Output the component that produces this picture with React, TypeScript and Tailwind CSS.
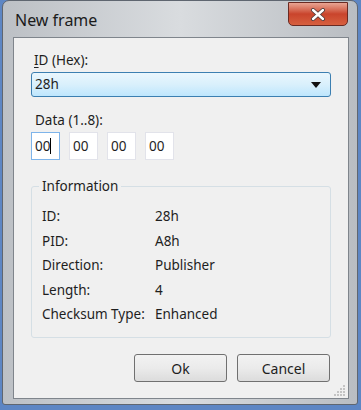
import React from "react"

const rows: [string, string][] = [
  ["ID:", "28h"],
  ["PID:", "A8h"],
  ["Direction:", "Publisher"],
  ["Length:", "4"],
  ["Checksum Type:", "Enhanced"],
]

const font = { fontFamily: '"Noto Sans", "Open Sans", sans-serif' }

export default function App() {
  return (
    <div className="w-[361px] h-[410px] bg-[#5d86c4] pl-[2px] pr-[3px] pb-[5px]" style={font}>
      <div className="h-full rounded-t-[7px] rounded-b-[3px] border border-[#5f6670] bg-gradient-to-r from-[#bcc0c5] via-[#d9dcdf] to-[#b9bdc2] flex flex-col">
        {/* title bar */}
        <div className="h-[36px] flex items-start justify-between pl-[12px] pr-[9px]">
          <span className="mt-[7px] text-[16px] text-[#1b1b1b]">New frame</span>
          <button className="mt-[1px] w-[60px] h-[24px] rounded-b-[5px] border border-[#6a2a22] bg-gradient-to-b from-[#e8a493] via-[#c9442c] to-[#d7603f] flex items-center justify-center">
            <svg width="16" height="13" viewBox="0 0 16 13">
              <path d="M3 2 L13 11 M13 2 L3 11" stroke="#4a3a3a" strokeWidth="4" strokeLinecap="round" />
              <path d="M3 2 L13 11 M13 2 L3 11" stroke="#ffffff" strokeWidth="2.4" strokeLinecap="round" />
            </svg>
          </button>
        </div>

        {/* client area */}
        <div className="flex-1 ml-[10px] mr-[8px] mb-[5px] border border-[#7f858c] bg-[#f0f0f0] relative">
          <div className="pl-[17px] pr-[17px] pt-[12px] text-[13.5px] text-[#1e1e1e]">
            <div className="pl-[3px] h-[20px] leading-[20px]">
              <span className="underline underline-offset-2">I</span>D (Hex):
            </div>
            <div className="mt-[2px] h-[25px] rounded-[3px] border border-[#3c7fb1] bg-gradient-to-b from-[#eaf6fd] via-[#d9f0fc] to-[#bee6fd] flex items-center justify-between pl-[3px] pr-[9px]">
              <span>28h</span>
              <svg width="10" height="6" viewBox="0 0 10 6">
                <path d="M0 0 H10 L5 6 Z" fill="#111" />
              </svg>
            </div>

            <div className="mt-[13px] pl-[4px] h-[20px] leading-[20px]">Data (1..8):</div>
            <div className="mt-[2px] flex gap-[9px]">
              {["00", "00", "00", "00"].map((v, i) => (
                <div
                  key={i}
                  className={`w-[29px] h-[28px] bg-white border flex items-center pl-[3px] ${
                    i === 0 ? "border-[#7eb4ea]" : "border-[#e2e3ea]"
                  }`}
                >
                  {v}
                  {i === 0 && <span className="w-px h-[16px] bg-black" />}
                </div>
              ))}
            </div>

            {/* group box */}
            <div className="mt-[26px] relative border border-[#d5dfe5] rounded-[3px] h-[152px] pl-[10px] pt-[17px]">
              <span className="absolute -top-[11px] left-[7px] px-[3px] bg-[#f0f0f0] leading-[20px]">Information</span>
              {rows.map(([k, v]) => (
                <div key={k} className="flex h-[24.5px] items-center">
                  <span className="w-[113px]">{k}</span>
                  <span>{v}</span>
                </div>
              ))}
            </div>

            <div className="mt-[16px] flex justify-end gap-[10px] pr-[1px]">
              {["Ok", "Cancel"].map((b) => (
                <button
                  key={b}
                  className="w-[93px] h-[28px] rounded-[3px] border border-[#707070] bg-gradient-to-b from-[#f2f2f2] via-[#ebebeb] to-[#dcdcdc] text-[14px] text-[#1e1e1e]"
                >
                  {b}
                </button>
              ))}
            </div>
          </div>

          {/* resize grip */}
          <svg className="absolute right-[2px] bottom-[2px]" width="12" height="12" viewBox="0 0 12 12">
            {[
              [9, 1], [6, 4], [9, 4], [3, 7], [6, 7], [9, 7], [0, 10], [3, 10], [6, 10], [9, 10],
            ].map(([x, y], i) => (
              <rect key={i} x={x} y={y} width="2" height="2" fill="#c4c4c4" />
            ))}
          </svg>
        </div>
      </div>
    </div>
  )
}
